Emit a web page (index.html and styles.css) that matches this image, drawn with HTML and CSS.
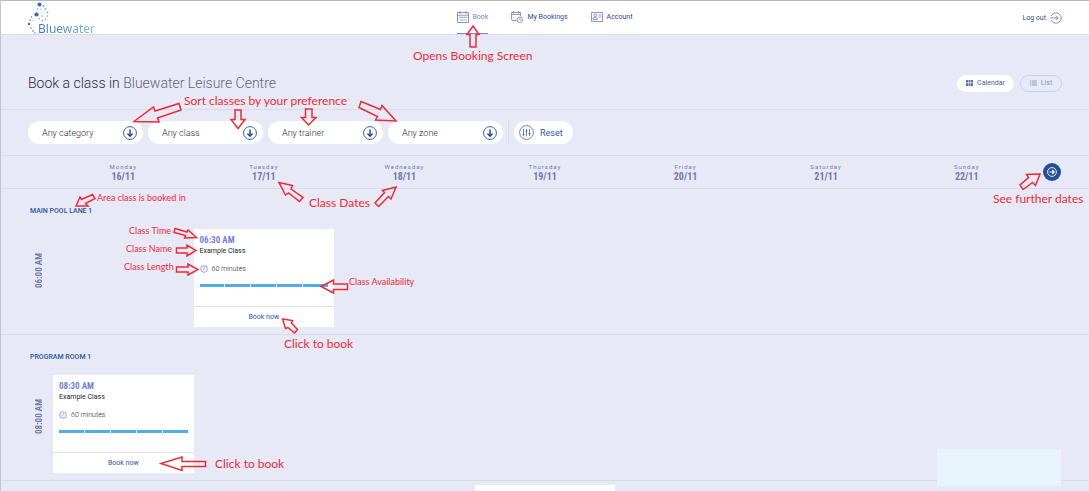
FILE: index.html
```
<!DOCTYPE html>
<html lang="en">
<head>
    <meta charset="UTF-8">
    <meta name="viewport" content="width=device-width, initial-scale=1.0">
    <title>Book a class - Bluewater Leisure Centre</title>
    <link rel="stylesheet" href="styles.css">
</head>
<body>

    <!-- shared icons -->
    <svg class="sprite" width="0" height="0">
        <symbol id="arrow-down" viewBox="0 0 14 14">
            <circle cx="7" cy="7" r="6.4" fill="none" stroke="currentColor" stroke-width="0.9"/>
            <path d="M7 3.4V10M4.4 7.4L7 10.2L9.6 7.4" fill="none" stroke="currentColor" stroke-width="1.5"/>
        </symbol>
        <symbol id="clock" viewBox="0 0 8 8">
            <circle cx="4" cy="4" r="3.3" fill="none" stroke="currentColor" stroke-width="0.8"/>
            <path d="M4.4 2L4 4.3L2.8 5" fill="none" stroke="currentColor" stroke-width="0.7"/>
        </symbol>
    </svg>

    <header class="topbar">
        <a href="#" class="logo">
            <svg class="logo-dots" width="24" height="33" viewBox="0 0 24 33">
                <g fill="#2f6db8">
                    <circle cx="12.5" cy="3.5" r="2"/>
                    <circle cx="9.5" cy="13.5" r="2.1"/>
                    <circle cx="2" cy="23" r="1.2"/>
                    <circle cx="3" cy="19" r="0.8"/>
                    <circle cx="4.5" cy="16" r="0.7"/>
                    <circle cx="4" cy="27" r="0.7"/>
                    <circle cx="6" cy="30" r="0.8"/>
                    <circle cx="8" cy="32" r="0.7"/>
                    <circle cx="6" cy="19" r="0.5"/>
                </g>
                <g fill="#6aa9e0">
                    <circle cx="16.5" cy="5" r="0.9"/>
                    <circle cx="18.5" cy="8" r="0.9"/>
                    <circle cx="20.5" cy="11.5" r="0.9"/>
                    <circle cx="20.5" cy="15" r="0.8"/>
                    <circle cx="18.5" cy="18" r="0.8"/>
                    <circle cx="15.5" cy="19.5" r="0.8"/>
                    <circle cx="15" cy="15" r="0.8"/>
                    <circle cx="12" cy="17.5" r="0.8"/>
                    <circle cx="10.5" cy="8" r="0.7"/>
                    <circle cx="14" cy="8.5" r="0.6"/>
                    <circle cx="16" cy="12" r="0.6"/>
                </g>
            </svg>
            <span class="logo-text">Bluewater</span>
        </a>
        <nav class="nav">
            <a href="#" class="active">
                <svg width="12" height="12" viewBox="0 0 12 12" fill="none" stroke="#6f7fbb" stroke-width="0.8">
                    <path d="M0.5 1.5H11.5V11.5H0.5ZM0.5 4.2H11.5M3 0V3M9 0V3"/>
                    <path d="M2.5 6.4H9.8M2.5 9H9.8" stroke-width="1.2" stroke-dasharray="1.2 0.8"/>
                </svg>
                Book
            </a>
            <a href="#">
                <svg width="12" height="12" viewBox="0 0 12 12" fill="none" stroke="#6f7fbb" stroke-width="0.8">
                    <path d="M5.5 9.5H2Q0.5 9.5 0.5 8V1.5H9.5V5M0.5 3.5H9.5M2.5 0V2.5M7.5 0V2.5"/>
                    <circle cx="8.8" cy="8.7" r="2.7"/>
                    <path d="M8.8 7.2V8.9H10"/>
                </svg>
                My Bookings
            </a>
            <a href="#">
                <svg width="12" height="12" viewBox="0 0 12 12" fill="none" stroke="#6f7fbb" stroke-width="0.8">
                    <path d="M0.5 1.5H11.5V10.5H0.5ZM7.5 4H10.3M7.5 6H10.3M1.8 8.6H6.5"/>
                    <circle cx="4.2" cy="4.4" r="1.4"/>
                    <path d="M1.8 8.5Q2 6.4 4.2 6.4Q6.4 6.4 6.6 8.5"/>
                </svg>
                Account
            </a>
        </nav>
        <a href="#" class="logout">
            Log out
            <svg width="12" height="12" viewBox="0 0 12 12" fill="none" stroke="#5f72b5" stroke-width="0.8">
                <path d="M1.2 4A5.2 5.2 0 1 1 1.2 8"/>
                <path d="M0 6H8M6 3.8L8.2 6L6 8.2"/>
            </svg>
        </a>
    </header>

    <section class="title-row">
        <h1>Book a class in <span>Bluewater Leisure Centre</span></h1>
        <div class="views">
            <button class="view selected">
                <svg width="7" height="6" viewBox="0 0 7 6" fill="#5672b4">
                    <path d="M0 0H2V2.6H0ZM2.5 0H4.5V2.6H2.5ZM5 0H7V2.6H5ZM0 3.2H2V6H0ZM2.5 3.2H4.5V6H2.5ZM5 3.2H7V6H5Z"/>
                </svg>
                Calendar
            </button>
            <button class="view">
                <svg width="7" height="6" viewBox="0 0 7 6" stroke="#8d93be" stroke-width="0.9">
                    <path d="M0 1H1M0 3H1M0 5H1M1.6 1H7M1.6 3H7M1.6 5H7"/>
                </svg>
                List
            </button>
        </div>
    </section>

    <section class="filters">
        <div class="filter">
            <select aria-label="Category"><option>Any category</option></select>
            <svg width="14" height="14"><use href="#arrow-down"/></svg>
        </div>
        <div class="filter">
            <select aria-label="Class"><option>Any class</option></select>
            <svg width="14" height="14"><use href="#arrow-down"/></svg>
        </div>
        <div class="filter">
            <select aria-label="Trainer"><option>Any trainer</option></select>
            <svg width="14" height="14"><use href="#arrow-down"/></svg>
        </div>
        <div class="filter">
            <select aria-label="Zone"><option>Any zone</option></select>
            <svg width="14" height="14"><use href="#arrow-down"/></svg>
        </div>
        <div class="divider"></div>
        <button class="reset">
            <svg width="15" height="15" viewBox="0 0 15 15" fill="none" stroke="#3f62ad" stroke-width="0.8">
                <circle cx="7.5" cy="7.5" r="6.9"/>
                <path d="M4.5 3.8V11.2M7.5 3.8V11.2M10.5 3.8V11.2M3.5 9.5H5.5M6.5 6H8.5M9.5 8.5H11.5"/>
            </svg>
            Reset
        </button>
    </section>

    <section class="days">
        <div class="day"><span>Monday</span><strong>16/11</strong></div>
        <div class="day"><span>Tuesday</span><strong>17/11</strong></div>
        <div class="day"><span>Wednesday</span><strong>18/11</strong></div>
        <div class="day"><span>Thursday</span><strong>19/11</strong></div>
        <div class="day"><span>Friday</span><strong>20/11</strong></div>
        <div class="day"><span>Saturday</span><strong>21/11</strong></div>
        <div class="day"><span>Sunday</span><strong>22/11</strong></div>
        <button class="next" aria-label="Next week">
            <svg width="10" height="10" viewBox="0 0 10 10" fill="none" stroke="#fff" stroke-width="0.9">
                <circle cx="5" cy="5" r="4.4"/>
                <path d="M2.4 5H7M5.2 3L7.3 5L5.2 7" stroke-width="1.1"/>
            </svg>
        </button>
    </section>

    <section class="area">
        <h2>MAIN POOL LANE 1</h2>
        <div class="slots">
            <div class="hour">06:00 AM</div>
            <article class="card tuesday">
                <div class="card-body">
                    <div class="time">06:30 AM</div>
                    <div class="name">Example Class</div>
                    <div class="length"><svg width="8" height="8"><use href="#clock"/></svg>60 minutes</div>
                    <div class="availability"><i></i><i></i><i></i><i></i><i></i></div>
                </div>
                <button class="book">Book now</button>
            </article>
        </div>
    </section>

    <section class="area">
        <h2>PROGRAM ROOM 1</h2>
        <div class="slots">
            <div class="hour">08:00 AM</div>
            <article class="card monday">
                <div class="card-body">
                    <div class="time">08:30 AM</div>
                    <div class="name">Example Class</div>
                    <div class="length"><svg width="8" height="8"><use href="#clock"/></svg>60 minutes</div>
                    <div class="availability"><i></i><i></i><i></i><i></i><i></i></div>
                </div>
                <button class="book">Book now</button>
            </article>
        </div>
    </section>

    <section class="area untitled">
        <div class="slots">
            <article class="card thursday"></article>
        </div>
    </section>

    <div class="widget"></div>

    <!-- help notes drawn over the screen -->
    <div class="notes">
        <svg width="1089" height="491" viewBox="0 0 1089 491" fill="none" stroke="#ee2b35" stroke-width="1.5">
            <path d="M473 26L479 34.5H476V47H470V34.5H467Z"/>
            <path d="M134 121.5L153.5 107L155 111L179 103.5L181 110L157.5 118L159 122Z"/>
            <path d="M235 110H241V119.5H245L238 128.5L231 119.5H235Z"/>
            <path d="M305.5 109H312V117.5H316L308.5 125L301.5 117.5H305.5Z"/>
            <path d="M361 101.5L380.5 109.5L382 105.5L396 121L375.5 120L377.5 116.5L359 107.5Z"/>
            <path d="M76 206L80 197L81.5 199.5L92.5 194.5L95 198.5L85.5 203.5L88 206Z"/>
            <path d="M279 182.5L292.5 185.5L291 189L303 197.5L299.5 201.5L288.5 193L285.5 195Z"/>
            <path d="M396 187L382.5 190.5L384.5 192.5L375 203L378.5 206.5L388.5 196.5L391 199Z"/>
            <path d="M1040 174L1026.5 174.5L1028.5 177.5L1020 185L1023 189.5L1032.5 182.5L1035.5 185.5Z"/>
            <path d="M175 228.5L174 232.5L185.5 235.5L184.5 238L196.5 237.5L188 230L187 232Z"/>
            <path d="M176.5 248H187V245L196 250.5L187 256V253H176.5Z"/>
            <path d="M176.5 267H188V264L198 269.5L188 275V272H176.5Z"/>
            <path d="M321 286.5L333.5 280V284H347.5V289.5H333.5V293Z"/>
            <path d="M282.5 319L292.5 320.5L291.5 323L297.5 329.5L294.5 333L288 327.5L285.5 328.5Z"/>
            <path d="M161 463.5L182 457V461.5H205.5V466.5H182V470.5Z"/>
        </svg>
        <span class="note note-open">Opens Booking Screen</span>
        <span class="note note-sort">Sort classes by your preference</span>
        <span class="note note-dates">Class Dates</span>
        <span class="note note-further">See further dates</span>
        <span class="note note-click-1">Click to book</span>
        <span class="note note-click-2">Click to book</span>
        <span class="note small note-area">Area class is booked in</span>
        <span class="note small note-time">Class Time</span>
        <span class="note small note-name">Class Name</span>
        <span class="note small note-length">Class Length</span>
        <span class="note small note-availability">Class Availability</span>
    </div>

</body>
</html>
```
FILE: styles.css
```
* { box-sizing: border-box; }
body {
    position: relative;
    display: flex;
    flex-direction: column;
    height: 100vh;
    margin: 0;
    overflow: hidden;
    border-top: 1px solid #b9b9bb;
    border-left: 1px solid #c3c3c8;
    background-color: #e7e9f7;
    font-family: Roboto, Arial, sans-serif;
    font-size: 7px;
    color: #2f4a8f;
}
header, section { flex: none; }
a {
    color: inherit;
    text-decoration: none;
}
button, select {
    font-family: inherit;
    border: none;
    cursor: pointer;
}
svg { display: block; flex: none; }
.sprite { position: absolute; }

/* Top bar */
.topbar {
    display: grid;
    grid-template-columns: 1fr auto 1fr;
    height: 34px;
    padding: 0 27px 0 26px;
    background: #fff;
    border-bottom: 1px solid #dcdeeb;
}
.logo {
    display: flex;
    align-items: flex-end;
}
.logo-text {
    margin-left: -13px;
    font-family: "Noto Sans", sans-serif;
    font-size: 12px;
    line-height: 10px;
    background: linear-gradient(90deg, #3f74b8, #7db8ea);
    -webkit-background-clip: text;
    background-clip: text;
    color: transparent;
}
.nav {
    display: flex;
    gap: 23px;
}
.nav a, .logout {
    display: flex;
    align-items: center;
    gap: 4px;
}
.nav a { border-bottom: 1px solid transparent; }
.nav .active {
    color: #7a83e0;
    border-color: #7a86d8;
}
.logout { justify-self: end; }

/* Title */
.title-row {
    display: flex;
    justify-content: space-between;
    align-items: center;
    height: 75px;
    padding: 22px 27px 0 27px;
    border-bottom: 1px solid #d9dbe8;
}
h1 {
    margin: 0;
    font-size: 14px;
    font-weight: 300;
    color: #2c2e3c;
}
h1 span { color: #62657a; }
.views {
    display: flex;
    gap: 6px;
}
.view {
    display: flex;
    justify-content: center;
    align-items: center;
    gap: 4px;
    width: 42px;
    height: 17px;
    padding: 0;
    border: 1px solid #cdd0e6;
    border-radius: 9px;
    background: none;
    font-size: 7px;
    color: #8d93be;
}
.view.selected {
    width: 57px;
    border-color: #fff;
    background: #fff;
    color: #3f5ca5;
}

/* Filters */
.filters {
    display: flex;
    align-items: center;
    gap: 5px;
    height: 46px;
    padding: 0 27px;
    border-bottom: 1px solid #d9dbe8;
}
.filter { position: relative; }
.filter select {
    appearance: none;
    display: block;
    width: 115px;
    height: 23px;
    padding: 0 28px 0 14px;
    border-radius: 12px;
    background: #fff;
    font-size: 9px;
    font-weight: 300;
    color: #2c2e3c;
}
.filter svg {
    position: absolute;
    top: 5px;
    right: 6px;
    color: #234f9e;
    pointer-events: none;
}
.divider {
    width: 1px;
    height: 23px;
    background: #d9dbe8;
}
.reset {
    display: flex;
    align-items: center;
    gap: 6px;
    height: 23px;
    padding: 0 10px 0 5px;
    border-radius: 12px;
    background: #fff;
    font-size: 9px;
    color: #2f55a4;
}

/* Days */
.days, .slots {
    position: relative;
    display: grid;
    grid-template-columns: repeat(7, 1fr);
    padding: 0 52px;
}
.days {
    height: 33px;
    border-bottom: 1px solid #d9dbe8;
}
.day {
    padding-top: 7px;
    text-align: center;
    color: #7478a8;
}
.day span {
    display: block;
    font-size: 6px;
    line-height: 8px;
    letter-spacing: 1px;
}
.day strong {
    display: block;
    font-family: "Liberation Sans Narrow", "Roboto Condensed", Roboto, sans-serif;
    font-size: 10px;
    line-height: 12px;
}
.next {
    position: absolute;
    top: 7px;
    right: 28px;
    display: flex;
    justify-content: center;
    align-items: center;
    width: 18px;
    height: 18px;
    padding: 0;
    border-radius: 50%;
    background: #234f9e;
}

/* Classes */
.area {
    height: 146px;
    padding-top: 17px;
    border-bottom: 1px solid #d9dbe8;
}
.area.untitled {
    flex: 1;
    min-height: 0;
    padding-top: 4px;
    overflow: hidden;
    border-bottom: none;
}
h2 {
    margin: 0 0 13px 29px;
    font-size: 7px;
    font-weight: 500;
    line-height: 10px;
    color: #2a559f;
}
.hour {
    position: absolute;
    top: 24px;
    left: 32px;
    writing-mode: vertical-rl;
    transform: rotate(180deg);
    font-family: "Liberation Sans Narrow", "Roboto Condensed", Roboto, sans-serif;
    font-size: 9px;
    font-weight: bold;
    line-height: 12px;
    color: #7478a8;
}
.card {
    height: 98px;
    background: #fff;
    color: #22242e;
}
.monday { grid-column: 1; }
.tuesday { grid-column: 2; }
.thursday { grid-column: 4; }
.card-body {
    height: 78px;
    padding: 5px 6px 0;
    border-bottom: 1px solid #dfe1ea;
}
.time {
    font-family: "Liberation Sans Narrow", "Roboto Condensed", Roboto, sans-serif;
    font-size: 9px;
    font-weight: bold;
    line-height: 12px;
    color: #747fe4;
}
.name { line-height: 10px; }
.length {
    display: flex;
    align-items: center;
    gap: 4px;
    margin-top: 8px;
    line-height: 10px;
    font-weight: 300;
}
.length svg { color: #7d88e0; }
.availability {
    display: flex;
    gap: 1px;
    margin-top: 10px;
}
.availability i {
    flex: 1;
    height: 3px;
    background: #4eaee8;
}
.book {
    display: block;
    width: 100%;
    height: 20px;
    padding: 0;
    background: none;
    font-size: 7px;
    color: #2f55a4;
}
.widget {
    position: absolute;
    right: 28px;
    bottom: 5px;
    width: 124px;
    height: 37px;
    background: #e8f4fb;
}

/* Notes */
.notes {
    position: absolute;
    top: -1px;
    left: -1px;
    pointer-events: none;
}
.note {
    position: absolute;
    font-family: Lato, "Open Sans", sans-serif;
    font-size: 12px;
    line-height: 16px;
    white-space: nowrap;
    color: #ee2b35;
}
.note.small {
    font-size: 9px;
    line-height: 12px;
}
.note-open { top: 48px; left: 413px; }
.note-sort { top: 93px; left: 184px; }
.note-dates { top: 195px; left: 309px; }
.note-further { top: 191px; left: 993px; }
.note-click-1 { top: 336px; left: 284px; }
.note-click-2 { top: 456px; left: 215px; }
.note-area { top: 192px; left: 97px; }
.note-time { top: 225px; left: 129px; }
.note-name { top: 243px; left: 126px; }
.note-length { top: 261px; left: 124px; }
.note-availability { top: 276px; left: 349px; }
```
